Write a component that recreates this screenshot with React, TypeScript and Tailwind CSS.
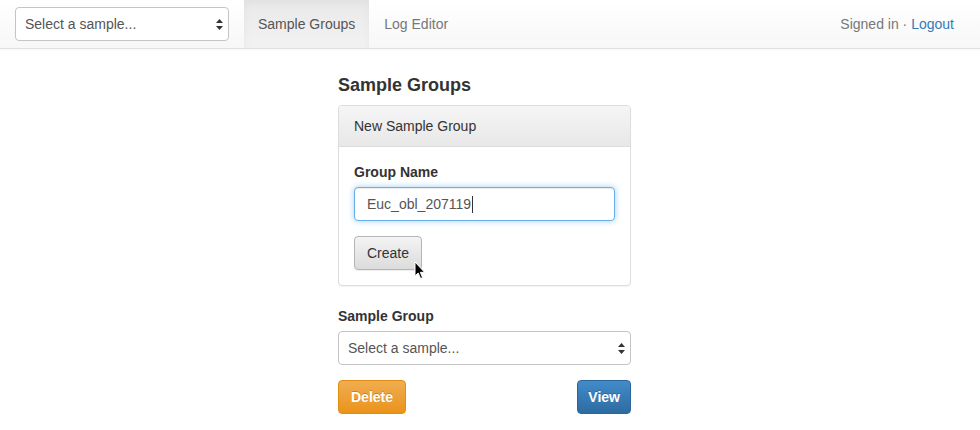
import React from 'react';

const font = { fontFamily: '"Liberation Sans", Arial, sans-serif' };

const SelectArrows: React.FC = () => (
  <svg width="7" height="11" viewBox="0 0 7 11" className="shrink-0">
    <path d="M3.5 0 L7 4 L0 4 Z" fill="#333" />
    <path d="M3.5 11 L7 7 L0 7 Z" fill="#333" />
  </svg>
);

const FakeSelect: React.FC<{ className?: string }> = ({ className = '' }) => (
  <div
    className={`flex items-center justify-between rounded-[4px] border border-[#c4c4c4] bg-white pl-[9px] pr-[5px] text-[14px] text-[#555] ${className}`}
  >
    <span>Select a sample...</span>
    <SelectArrows />
  </div>
);

const Cursor: React.FC = () => (
  <svg width="12" height="19" viewBox="0 0 12 19" className="absolute left-[60px] top-[25px]">
    <path
      d="M1 1 L1 15 L4.2 12 L6.6 17.5 L8.6 16.6 L6.3 11.3 L10.6 11.3 Z"
      fill="#000"
      stroke="#fff"
      strokeWidth="1"
      strokeLinejoin="round"
    />
  </svg>
);

export default function App() {
  return (
    <div className="min-h-[430px] bg-white text-[14px] text-[#333]" style={font}>
      <nav className="flex h-[49px] items-stretch border-b border-[#e2e2e2] bg-gradient-to-b from-white to-[#f7f7f7] shadow-[0_1px_2px_rgba(0,0,0,0.04)]">
        <div className="flex items-center pl-[15px] pr-[15px]">
          <FakeSelect className="h-[34px] w-[214px]" />
        </div>
        <div className="flex items-center bg-[#ebebeb] bg-gradient-to-b from-[#e9e9e9] to-[#f2f2f2] px-[14px] text-[#555] shadow-[inset_0_3px_9px_rgba(0,0,0,0.04)]">
          Sample Groups
        </div>
        <div className="flex items-center px-[15px] text-[#777]">Log Editor</div>
        <div className="ml-auto flex items-center pr-[26px] text-[#777]">
          Signed in ·&nbsp;<span className="text-[#337ab7]">Logout</span>
        </div>
      </nav>

      <div className="mx-auto flex w-[304px] flex-col pr-[11px]">
        <h3 className="mt-[26px] mb-[10px] text-[18px] font-bold leading-[20px] text-[#333]">Sample Groups</h3>

        <div className="rounded-[4px] border border-[#ddd] bg-white shadow-[0_1px_1px_rgba(0,0,0,0.05)]">
          <div className="flex h-[41px] items-center rounded-t-[4px] border-b border-[#ddd] bg-gradient-to-b from-[#f5f5f5] to-[#e8e8e8] px-[15px] text-[#333]">
            New Sample Group
          </div>
          <div className="px-[15px] pt-[15px] pb-[15px]">
            <label className="mb-[5px] block font-bold leading-[20px]">Group Name</label>
            <div className="flex h-[34px] items-center rounded-[4px] border border-[#66afe9] bg-white px-[12px] text-[#555] shadow-[inset_0_1px_1px_rgba(0,0,0,0.075),0_0_6px_rgba(102,175,233,0.6)]">
              <span>Euc_obl_207119</span>
              <span className="ml-[1px] inline-block h-[17px] w-[1px] bg-[#333]" />
            </div>
            <div className="relative mt-[15px] w-fit">
              <button className="h-[34px] rounded-[4px] border border-[#b5b5b5] bg-gradient-to-b from-[#f3f3f3] to-[#dcdcdc] px-[12px] text-[14px] text-[#333] shadow-[inset_0_1px_0_rgba(255,255,255,0.15),0_1px_1px_rgba(0,0,0,0.075)]">
                Create
              </button>
              <Cursor />
            </div>
          </div>
        </div>

        <label className="mt-[20px] mb-[5px] block font-bold leading-[20px]">Sample Group</label>
        <FakeSelect className="h-[34px] w-full" />

        <div className="mt-[15px] flex justify-between">
          <button className="h-[34px] rounded-[4px] border border-[#e38d13] bg-gradient-to-b from-[#f0ad4e] to-[#eb9316] px-[12px] text-[14px] font-bold text-white [text-shadow:0_-1px_0_rgba(0,0,0,0.2)]">
            Delete
          </button>
          <button className="h-[34px] rounded-[4px] border border-[#2b669a] bg-gradient-to-b from-[#428bca] to-[#2d6ca2] px-[10px] text-[14px] font-bold text-white [text-shadow:0_-1px_0_rgba(0,0,0,0.2)]">
            View
          </button>
        </div>
      </div>
    </div>
  );
}
